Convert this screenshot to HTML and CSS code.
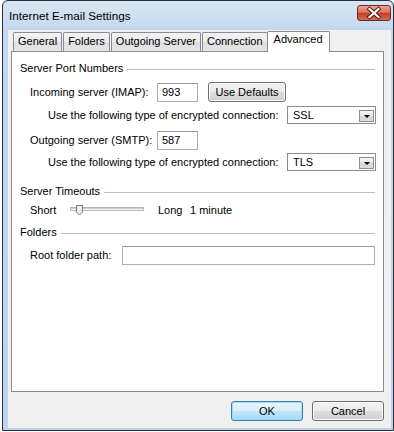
FILE: index.html
```html
<!DOCTYPE html>
<html>
<head>
<meta charset="utf-8">
<link rel="stylesheet" href="styles.css">
</head>
<body>
<div class="window">
  <div class="titlebar">
    <span class="title">Internet E-mail Settings</span>
    <span class="close">
      <svg width="34" height="16" viewBox="0 0 34 16">
        <path d="M12.5 4 L21.5 12 M21.5 4 L12.5 12" stroke="#4a1a16" stroke-width="4" stroke-linecap="square" fill="none"/>
        <path d="M12.5 4 L21.5 12 M21.5 4 L12.5 12" stroke="#ffffff" stroke-width="2.2" stroke-linecap="square" fill="none"/>
      </svg>
    </span>
  </div>
  <div class="content">
    <div class="tabs">
      <div class="tab">General</div>
      <div class="tab">Folders</div>
      <div class="tab">Outgoing Server</div>
      <div class="tab">Connection</div>
      <div class="tab active">Advanced</div>
    </div>
    <div class="panel">
      <div class="group g1"><span class="gtext">Server Port Numbers</span><span class="rule"></span></div>
      <div class="row r1">
        <span class="lbl lbl-port">Incoming server (IMAP):</span>
        <div class="input port">993</div>
        <button class="btn defaults">Use Defaults</button>
      </div>
      <div class="row r2 enc">
        <span class="lbl">Use the following type of encrypted connection:</span>
        <div class="select"><span>SSL</span><span class="drop"></span></div>
      </div>
      <div class="row r3">
        <span class="lbl lbl-port">Outgoing server (SMTP):</span>
        <div class="input port">587</div>
      </div>
      <div class="row r4 enc">
        <span class="lbl">Use the following type of encrypted connection:</span>
        <div class="select"><span>TLS</span><span class="drop"></span></div>
      </div>
      <div class="group g2"><span class="gtext">Server Timeouts</span><span class="rule"></span></div>
      <div class="row r5">
        <span class="lbl lbl-short">Short</span>
        <svg class="slider" width="74" height="13" viewBox="0 0 74 13">
          <rect x="0.5" y="3.5" width="73" height="3" fill="#f4f4f4" stroke="#bdbdbd"/>
          <line x1="1" y1="4" x2="73" y2="4" stroke="#a6a6a6"/>
          <path d="M6.5 1.5 H12.5 V8 L9.5 11 L6.5 8 Z" fill="#ececec" stroke="#7a7a7a"/>
        </svg>
        <span class="lbl lbl-long">Long</span>
        <span class="lbl">1 minute</span>
      </div>
      <div class="group g3"><span class="gtext">Folders</span><span class="rule"></span></div>
      <div class="row r6">
        <span class="lbl lbl-root">Root folder path:</span>
        <div class="input wide"></div>
      </div>
    </div>
    <div class="actions">
      <button class="btn ok">OK</button>
      <button class="btn">Cancel</button>
    </div>
  </div>
</div>
</body>
</html>
```

FILE: styles.css
```css
html, body {
  margin: 0;
  padding: 0;
  background: #ffffff;
}

body {
  font-family: "Liberation Sans", Arial, sans-serif;
  font-size: 11px;
  color: #000;
}

.window {
  margin-left: 2px;
  width: 392px;
  height: 431px;
  box-sizing: border-box;
  border: 1px solid #27313c;
  border-radius: 6px 6px 0 0;
  background: linear-gradient(#d9e6f3, #c4d8ed 28px, #bfd4ea);
  padding: 0 2px 2px 5px;
  display: flex;
  flex-direction: column;
}

.titlebar {
  height: 29px;
  display: flex;
  align-items: flex-start;
}

.title {
  padding-top: 7px;
  padding-left: 1px;
  line-height: 15px;
  font-size: 11.7px;
}

.close {
  margin-left: auto;
  margin-top: 4px;
  margin-right: 0;
  width: 34px;
  height: 16px;
  box-sizing: border-box;
  border: 1px solid #6b2b24;
  border-radius: 3px;
  background: linear-gradient(#eba391, #d9735d 45%, #c63f27 52%, #d26a50);
  display: flex;
  align-items: center;
  justify-content: center;
  overflow: hidden;
}

.close svg {
  display: block;
  flex: none;
}

.content {
  flex: 1;
  background: #f0f0f0;
  display: flex;
  flex-direction: column;
  padding: 1px 7px 7px 3px;
}

.tabs {
  display: flex;
  align-items: flex-end;
  height: 20px;
  padding-left: 2px;
  gap: 0;
}

.tab {
  height: 19px;
  box-sizing: border-box;
  padding: 0 4px;
  line-height: 17px;
  border: 1px solid #898c95;
  border-bottom: none;
  border-radius: 2px 2px 0 0;
  background: linear-gradient(#f3f3f3, #ebebeb 50%, #dedede 51%, #e6e6e6);
  margin-right: 1px;
}

.tab.active {
  height: 21px;
  margin-bottom: -1px;
  position: relative;
  z-index: 1;
  background: #ffffff;
  padding: 0 6px;
  line-height: 15px;
  margin-left: -2px;
}

.panel {
  height: 341px;
  box-sizing: border-box;
  border: 1px solid #898c95;
  background: #ffffff;
  padding: 0 8px 0 8px;
  display: flex;
  flex-direction: column;
}

.group {
  display: flex;
  align-items: center;
  height: 15px;
  line-height: 15px;
}

.gtext {
  margin-right: 4px;
}

.rule {
  flex: 1;
  height: 0;
  border-top: 1px solid #bcbcbc;
  margin-top: 1px;
}

.g1 { margin-top: 9px; }
.g2 { margin-top: 13px; }
.g3 { margin-top: 7px; }

.row {
  display: flex;
  align-items: center;
  padding-left: 10px;
}

.row.enc {
  padding-left: 28px;
  height: 18px;
}

.r1 { margin-top: 6px; height: 20px; }
.r2 { margin-top: 4px; }
.r3 { margin-top: 6px; height: 20px; }
.r4 { margin-top: 3px; }
.r5 { margin-top: 4px; height: 15px; }
.r6 { margin-top: 6px; height: 19px; }

.lbl {
  white-space: nowrap;
  line-height: 15px;
}

.lbl-port {
  width: 127px;
  flex: none;
}

.lbl-root {
  width: 92px;
  flex: none;
}

.lbl-short {
  width: 40px;
  flex: none;
}

.lbl-long {
  width: 32px;
  flex: none;
  margin-left: 14px;
}

.input {
  height: 19px;
  box-sizing: border-box;
  border: 1px solid #abadb3;
  border-top-color: #9a9da4;
  background: #fff;
  padding-left: 4px;
  line-height: 17px;
}

.input.port {
  width: 41px;
}

.input.wide {
  flex: 1;
}

.select {
  margin-left: auto;
  width: 89px;
  height: 18px;
  box-sizing: border-box;
  border: 1px solid #8a8d94;
  background: #fff;
  display: flex;
  align-items: center;
  justify-content: space-between;
  padding: 1px 1px 0 5px;
  line-height: 15px;
  margin-right: -1px;
}

.drop {
  width: 15px;
  height: 12px;
  box-sizing: border-box;
  border: 1px solid #8d8f93;
  background: linear-gradient(#f7f7f7, #e3e3e3 50%, #d4d4d4 51%, #dcdcdc);
  position: relative;
}

.drop::after {
  content: "";
  position: absolute;
  left: 4px;
  top: 4px;
  border-left: 3px solid transparent;
  border-right: 3px solid transparent;
  border-top: 3px solid #000;
}

.slider {
  display: block;
  flex: none;
  align-self: flex-start;
  margin-top: 1px;
}

.btn {
  font: inherit;
  color: #000;
  height: 20px;
  box-sizing: border-box;
  border: 1px solid #707070;
  border-radius: 3px;
  background: linear-gradient(#f2f2f2, #ebebeb 50%, #dddddd 51%, #cfcfcf);
  box-shadow: inset 0 0 0 1px #fbfbfb;
  padding: 0;
  line-height: 16px;
  text-align: center;
}

.defaults {
  margin-left: 10px;
  width: 78px;
  align-self: flex-end;
}

.actions {
  display: flex;
  justify-content: flex-end;
  gap: 9px;
  margin-top: 9px;
}

.actions .btn {
  width: 72px;
}

.btn.ok {
  border-color: #3c7fb1;
  background: linear-gradient(#eaf6fd, #d9f0fc 50%, #bee6fd 51%, #a7d9f5);
  box-shadow: inset 0 0 0 1px #9fdcf8;
}
```
